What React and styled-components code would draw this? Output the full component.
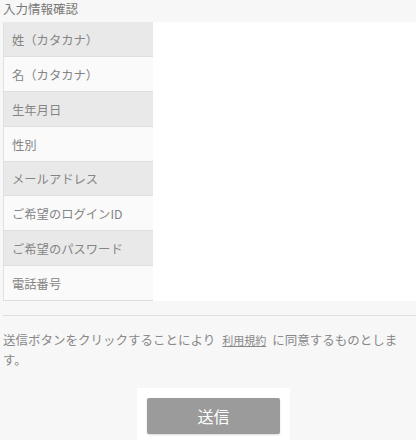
import React from "react";
import styled, { createGlobalStyle } from "styled-components";

const GlobalStyle = createGlobalStyle`
  html, body {
    margin: 0;
    padding: 0;
    background: #f7f7f7;
    font-family: "Noto Sans CJK JP", "Liberation Sans", sans-serif;
  }
`;

const Page = styled.div`
  width: 416px;
  height: 440px;
  padding-left: 3px;
  box-sizing: border-box;
  overflow: hidden;
`;

const Title = styled.h2`
  margin: 0;
  height: 22px;
  box-sizing: border-box;
  padding-top: 1px;
  font-size: 12.5px;
  font-weight: normal;
  line-height: 16px;
  color: #777;
`;

const TableArea = styled.div`
  display: flex;
  height: 279px;
`;

const LabelColumn = styled.div`
  width: 150px;
  display: flex;
  flex-direction: column;
  border-left: 1px solid #e2e2e2;
  box-sizing: border-box;
`;

const LabelCell = styled.div`
  flex: 1;
  display: flex;
  align-items: center;
  padding: 2px 0 0 8px;
  font-size: 12.3px;
  color: #858585;
  background: ${(p) => (p.$shaded ? "#e9e9e9" : "#fafafa")};
  border-bottom: 1px solid #dedede;
`;

const ValueArea = styled.div`
  flex: 1;
  background: #ffffff;
`;

const Rule = styled.hr`
  margin: 14px 0 0 0;
  border: none;
  border-top: 1px solid #e0e0e0;
`;

const Notice = styled.p`
  margin: 14px 0 0 0;
  font-size: 12.5px;
  line-height: 20px;
  color: #888;
`;

const TermsLink = styled.a`
  font-size: 11px;
  color: #888;
  text-decoration: underline;
  margin: 0 6px 0 7px;
`;

const ButtonWrap = styled.div`
  display: flex;
  justify-content: center;
  margin-top: 18px;
  padding-left: 8px;
`;

const ButtonPad = styled.div`
  background: #ffffff;
  padding: 10px 10px 8px;
`;

const SubmitButton = styled.button`
  width: 133px;
  height: 36px;
  border: none;
  border-radius: 2px;
  background: #9b9b9b;
  color: #ffffff;
  font-family: inherit;
  font-size: 16px;
  box-shadow: 0 1px 2px rgba(0, 0, 0, 0.15);
`;

const labels = [
  "姓（カタカナ）",
  "名（カタカナ）",
  "生年月日",
  "性別",
  "メールアドレス",
  "ご希望のログインID",
  "ご希望のパスワード",
  "電話番号",
];

export default function App() {
  return (
    <>
      <GlobalStyle />
      <Page>
        <Title>入力情報確認</Title>
        <TableArea>
          <LabelColumn>
            {labels.map((l, i) => (
              <LabelCell key={l} $shaded={i % 2 === 0}>
                {l}
              </LabelCell>
            ))}
          </LabelColumn>
          <ValueArea />
        </TableArea>
        <Rule />
        <Notice>
          送信ボタンをクリックすることにより
          <TermsLink href="#">利用規約</TermsLink>
          に同意するものとします。
        </Notice>
        <ButtonWrap>
          <ButtonPad>
            <SubmitButton>送信</SubmitButton>
          </ButtonPad>
        </ButtonWrap>
      </Page>
    </>
  );
}
